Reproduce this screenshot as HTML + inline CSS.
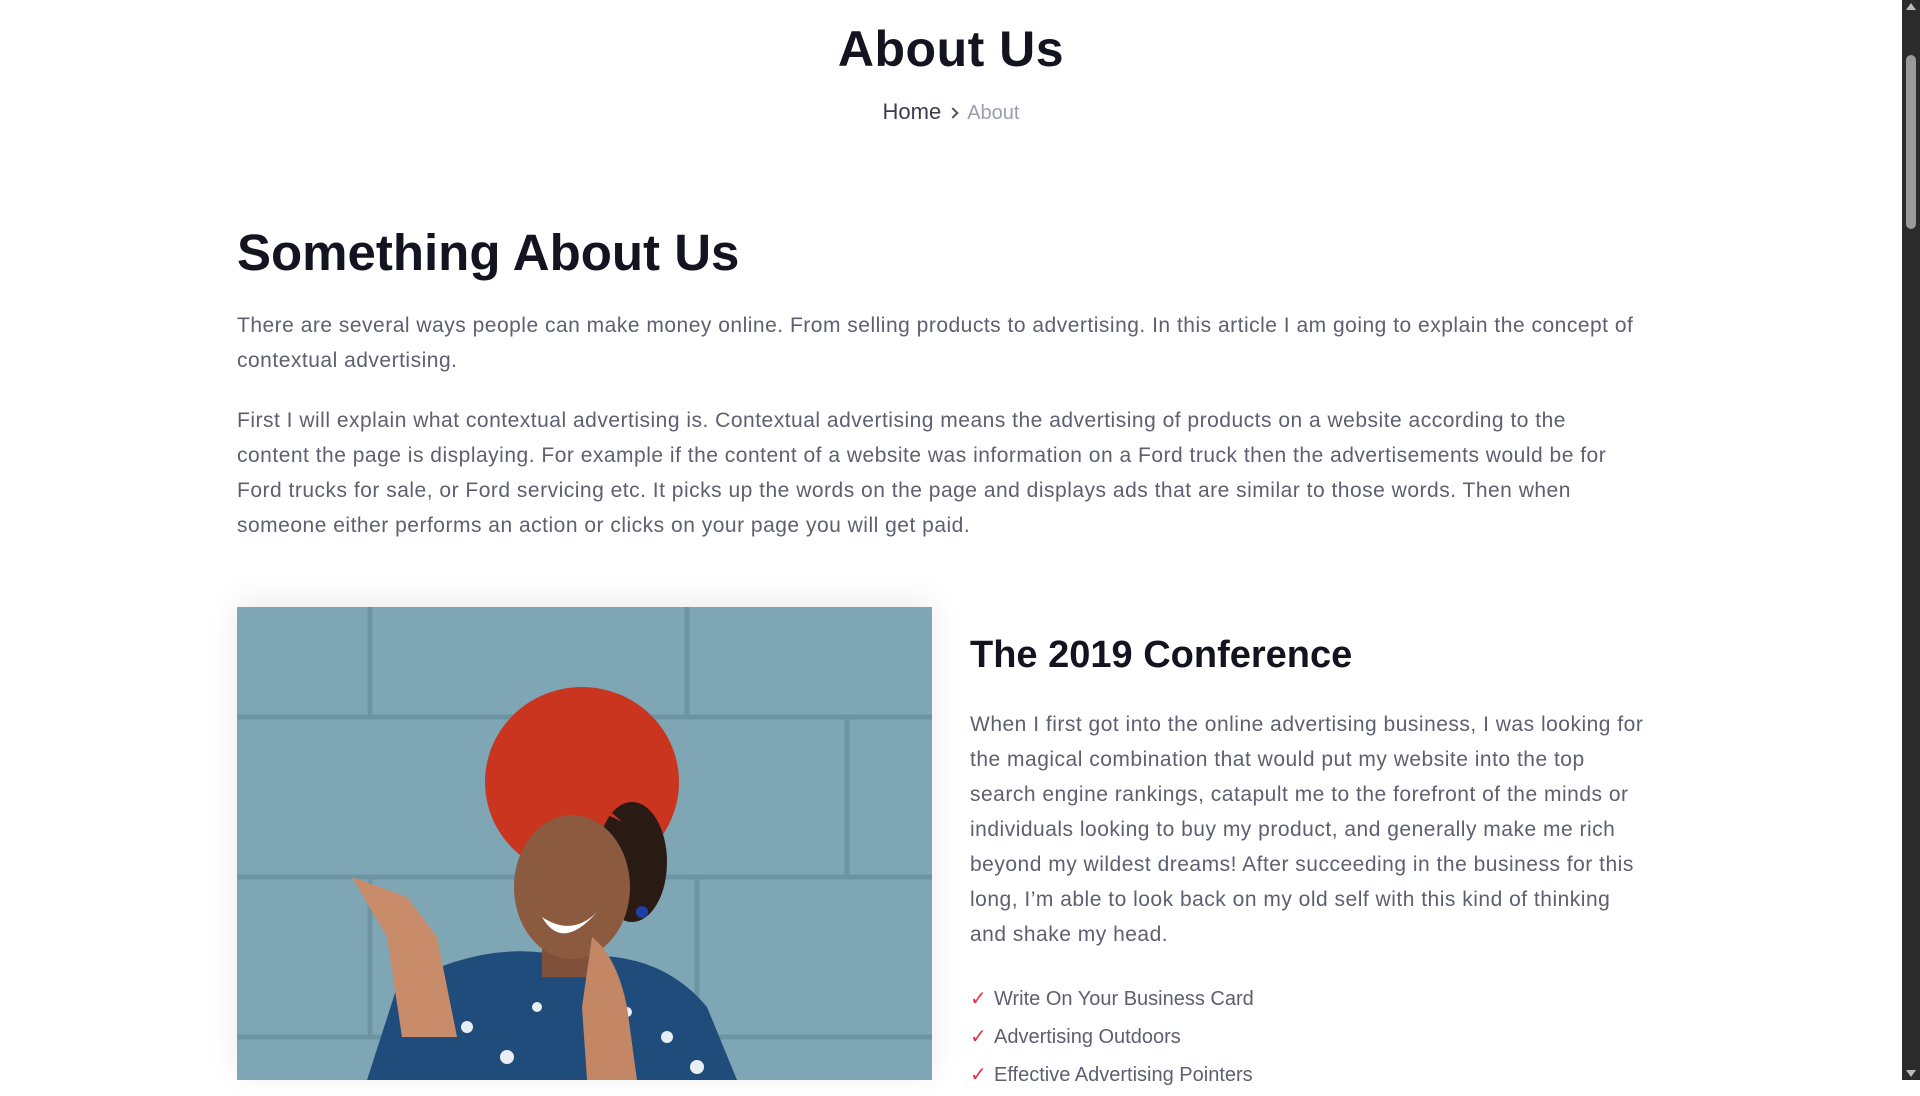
<!DOCTYPE html>
<html><head><meta charset="utf-8">
<style>
*{margin:0;padding:0;box-sizing:border-box}
html,body{width:1920px;height:1080px;overflow:hidden;background:#fff;font-family:"Liberation Sans",sans-serif}
.sb{position:absolute;left:1902px;top:0;width:18px;height:1080px;background:#2b2b2b}
.sb .th{position:absolute;left:4px;top:55px;width:10px;height:174px;background:#9a9a9a;border-radius:5px}
.sb .up{position:absolute;left:4px;top:3px;width:0;height:0;border-left:5px solid transparent;border-right:5px solid transparent;border-bottom:7px solid #bbb}
.sb .dn{position:absolute;left:4px;bottom:3px;width:0;height:0;border-left:5px solid transparent;border-right:5px solid transparent;border-top:7px solid #bbb}
h1{position:absolute;left:0;width:1902px;text-align:center;top:20px;font-size:50px;font-weight:700;color:#141420;letter-spacing:0.5px}
.bc{position:absolute;left:0;width:1902px;text-align:center;top:99px;font-size:22px;color:#3a3d4d}
.bc .a{color:#9a9fae;font-size:20px}
.bc .c{display:inline-block;width:8px;height:8px;border-right:2px solid #555;border-top:2px solid #555;transform:rotate(45deg);margin:0 10px 2px 8px}
h2{position:absolute;left:237px;top:223px;font-size:51px;font-weight:700;color:#141420}
p{position:absolute;color:#5d6070;font-size:21px;line-height:35px;letter-spacing:0.5px}
h3{position:absolute;left:970px;top:634px;font-size:38px;font-weight:700;color:#141420}
ul{position:absolute;left:970px;top:982px;list-style:none;font-size:20px;color:#5d6070}
li{height:38px;line-height:34px}
li span{color:#e8343f;font-size:20px;margin-right:8px;display:inline-block;width:16px}
.img{position:absolute;left:237px;top:607px;width:695px;height:473px;box-shadow:0 -6px 30px rgba(0,0,0,0.08)}
</style></head><body>
<h1>About Us</h1>
<div class="bc">Home<span class="c"></span><span class="a">About</span></div>
<h2>Something About Us</h2>
<p style="left:237px;top:308px;width:1460px">There are several ways people can make money online. From selling products to advertising. In this article I am going to explain the concept of<br>contextual advertising.</p>
<p style="left:237px;top:403px;width:1460px">First I will explain what contextual advertising is. Contextual advertising means the advertising of products on a website according to the<br>content the page is displaying. For example if the content of a website was information on a Ford truck then the advertisements would be for<br>Ford trucks for sale, or Ford servicing etc. It picks up the words on the page and displays ads that are similar to those words. Then when<br>someone either performs an action or clicks on your page you will get paid.</p>
<div class="img"><svg width="695" height="473" viewBox="0 0 695 473">
<rect width="695" height="473" fill="#7fa6b5"/>
<g stroke="#6d94a3" stroke-width="5" fill="none">
<path d="M0 110H695M0 270H695M0 430H695"/>
<path d="M133 0V110M450 0V110M610 110V270M133 270V430M460 270V430"/>
</g>
<path d="M130 473 L160 380 Q250 330 330 350 Q420 340 470 400 L500 473Z" fill="#1f4c7a"/>
<g fill="#e8eef3"><circle cx="230" cy="420" r="6"/><circle cx="270" cy="450" r="7"/><circle cx="430" cy="430" r="6"/><circle cx="460" cy="460" r="7"/><circle cx="300" cy="400" r="5"/><circle cx="390" cy="405" r="5"/></g>
<ellipse cx="345" cy="175" rx="97" ry="95" fill="#c9351f"/>
<ellipse cx="395" cy="255" rx="35" ry="60" fill="#2a1a14"/>
<rect x="305" y="320" width="55" height="50" fill="#7f503a"/>
<ellipse cx="335" cy="280" rx="58" ry="72" fill="#8c5a3f"/>
<path d="M290 215 Q330 185 385 215 Q360 190 335 195 Q305 195 290 215Z" fill="#c9351f"/>
<path d="M360 305 Q335 330 305 310 Q325 345 360 305Z" fill="#fff"/>
<path d="M115 270 L150 330 L165 430 L220 430 L200 330 L170 290Z" fill="#c98c6a"/>
<path d="M355 330 Q380 350 390 400 L400 473 L350 473 L345 400Z" fill="#c48766"/>
<circle cx="405" cy="305" r="6" fill="#1e3fa8"/>
</svg></div>
<h3>The 2019 Conference</h3>
<p style="left:970px;top:707px;width:720px">When I first got into the online advertising business, I was looking for<br>the magical combination that would put my website into the top<br>search engine rankings, catapult me to the forefront of the minds or<br>individuals looking to buy my product, and generally make me rich<br>beyond my wildest dreams! After succeeding in the business for this<br>long, I’m able to look back on my old self with this kind of thinking<br>and shake my head.</p>
<ul><li><span>✓</span>Write On Your Business Card</li><li><span>✓</span>Advertising Outdoors</li><li><span>✓</span>Effective Advertising Pointers</li></ul>
<div class="sb"><div class="up"></div><div class="th"></div><div class="dn"></div></div>
</body></html>
